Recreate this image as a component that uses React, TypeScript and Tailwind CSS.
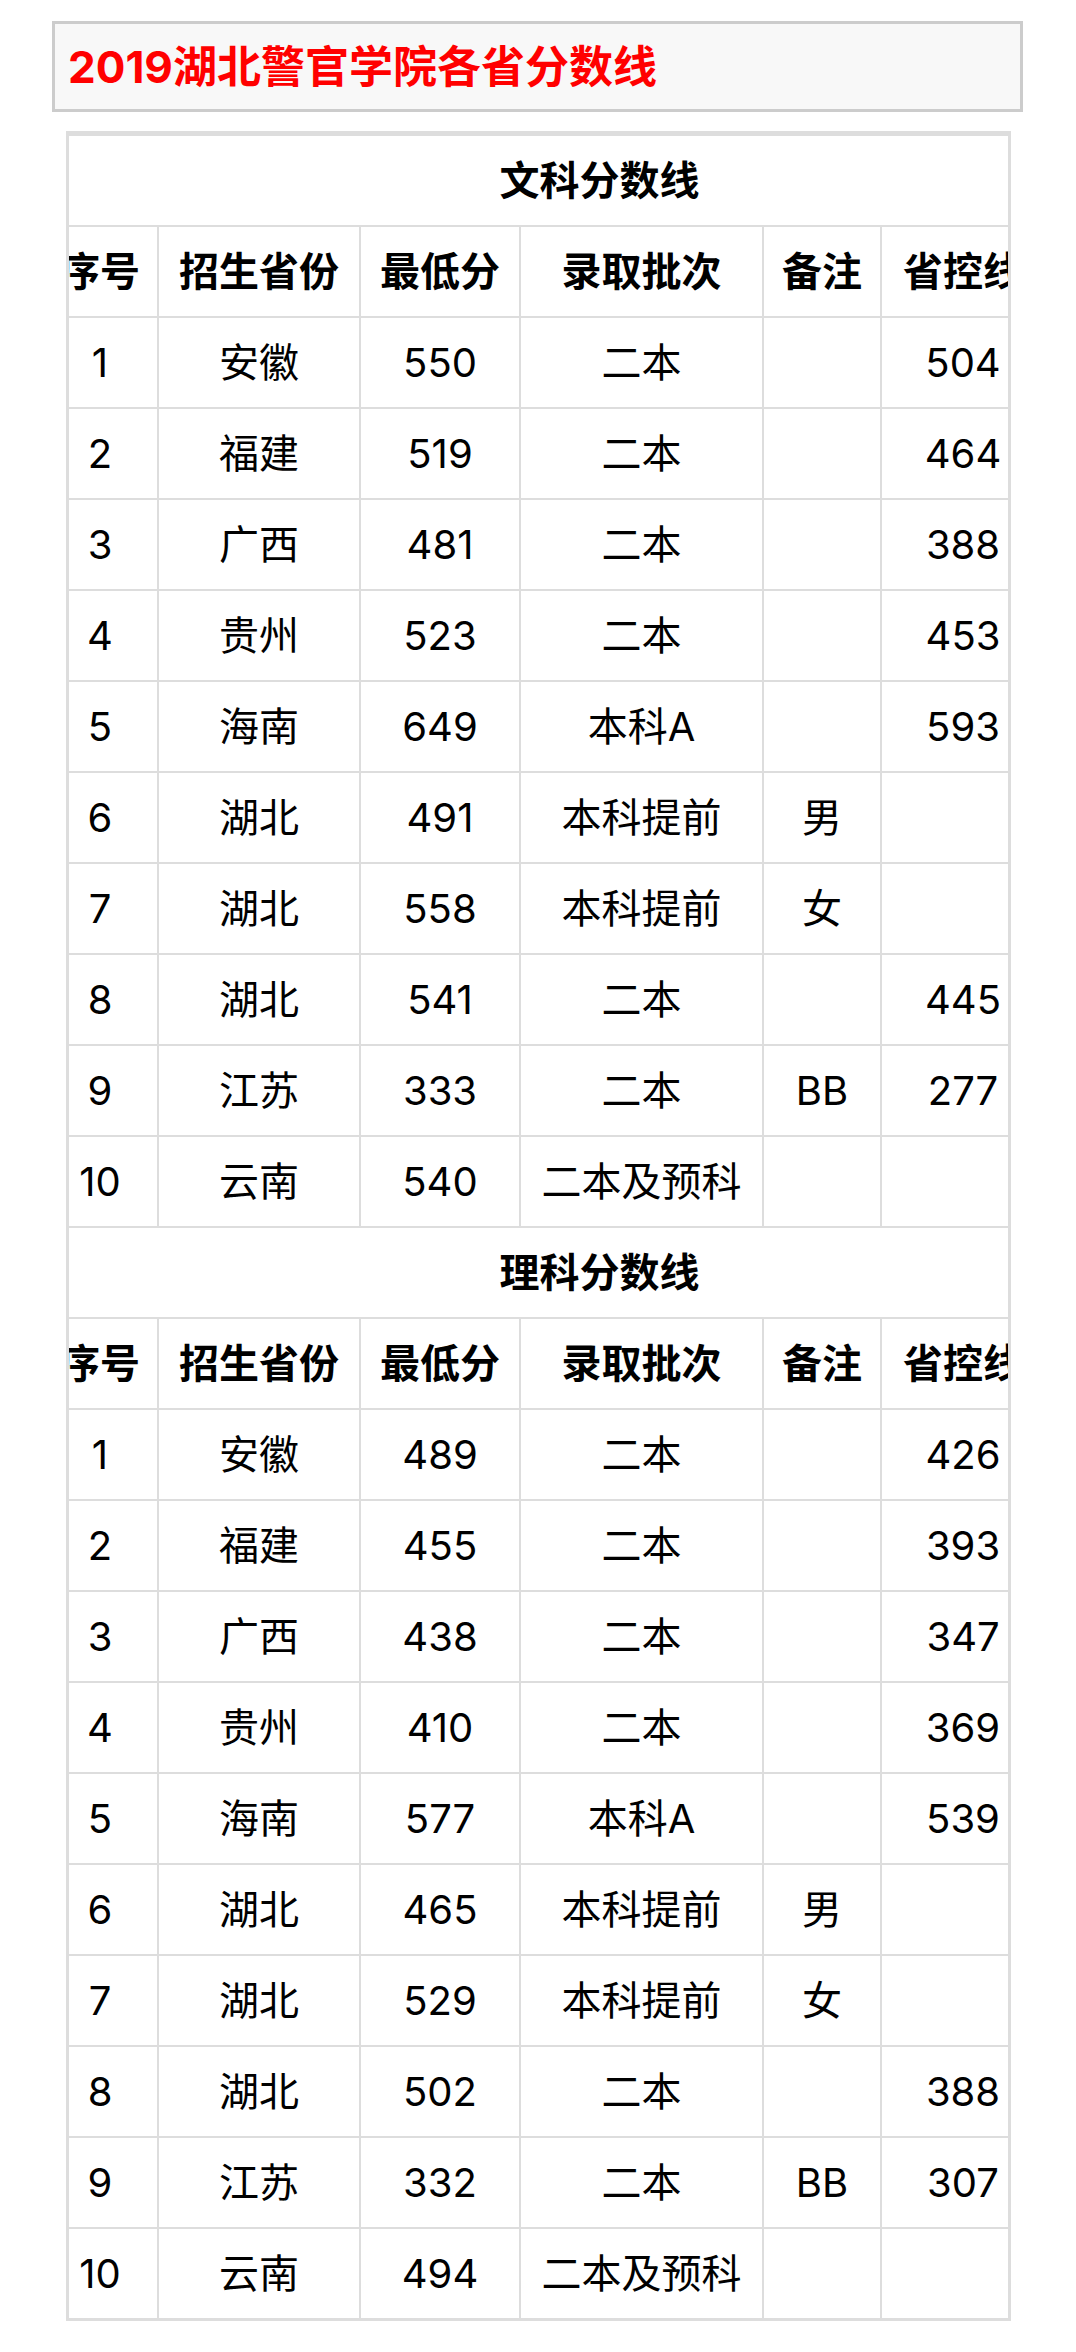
import React from "react";

type Row = [string, string, string, string, string, string];

const wenke: Row[] = [
  ["1", "安徽", "550", "二本", "", "504"],
  ["2", "福建", "519", "二本", "", "464"],
  ["3", "广西", "481", "二本", "", "388"],
  ["4", "贵州", "523", "二本", "", "453"],
  ["5", "海南", "649", "本科A", "", "593"],
  ["6", "湖北", "491", "本科提前", "男", ""],
  ["7", "湖北", "558", "本科提前", "女", ""],
  ["8", "湖北", "541", "二本", "", "445"],
  ["9", "江苏", "333", "二本", "BB", "277"],
  ["10", "云南", "540", "二本及预科", "", ""],
];

const like: Row[] = [
  ["1", "安徽", "489", "二本", "", "426"],
  ["2", "福建", "455", "二本", "", "393"],
  ["3", "广西", "438", "二本", "", "347"],
  ["4", "贵州", "410", "二本", "", "369"],
  ["5", "海南", "577", "本科A", "", "539"],
  ["6", "湖北", "465", "本科提前", "男", ""],
  ["7", "湖北", "529", "本科提前", "女", ""],
  ["8", "湖北", "502", "二本", "", "388"],
  ["9", "江苏", "332", "二本", "BB", "307"],
  ["10", "云南", "494", "二本及预科", "", ""],
];

const headers = ["序号", "招生省份", "最低分", "录取批次", "备注", "省控线"];

const cell = "h-[91px] p-0 border-t-2 border-l-2 border-[#dddddd] text-center align-middle whitespace-nowrap overflow-visible";

const Section: React.FC<{ title: string; rows: Row[] }> = ({ title, rows }) => (
  <>
    <tr>
      <td colSpan={6} className={`${cell} font-bold pl-[112px]`}>
        {title}
      </td>
    </tr>
    <tr>
      {headers.map((h) => (
        <td key={h} className={`${cell} font-bold`}>
          {h}
        </td>
      ))}
    </tr>
    {rows.map((r) => (
      <tr key={r[0]}>
        {r.map((v, i) => (
          <td key={i} className={cell}>
            {v}
          </td>
        ))}
      </tr>
    ))}
  </>
);

export default function App() {
  return (
    <div className="min-h-[2352px] w-[1076px] bg-white text-black font-['Inter','Noto_Sans_CJK_SC',sans-serif]">
      <div className="pt-[21px] pl-[52px]">
        {/* Title */}
        <div className="w-[971px] h-[91px] border-[3px] border-[#cccccc] bg-[#f8f8f8] flex items-center pl-[13px]">
          <h1 className="text-[44px] font-bold text-[#ff0000] leading-none">
            2019湖北警官学院各省分数线
          </h1>
        </div>
      </div>

      {/* Table */}
      <div className="mt-[19px] ml-[66px] w-[945px] border-[3px] border-[#dddddd] overflow-hidden">
        <table className="ml-[-28px] w-[1003px] table-fixed border-separate border-spacing-0 text-[40px] leading-none">
          <colgroup>
            <col className="w-[116px]" />
            <col className="w-[202px]" />
            <col className="w-[160px]" />
            <col className="w-[243px]" />
            <col className="w-[118px]" />
            <col className="w-[164px]" />
          </colgroup>
          <tbody>
            <Section title="文科分数线" rows={wenke} />
            <Section title="理科分数线" rows={like} />
          </tbody>
        </table>
      </div>
    </div>
  );
}
